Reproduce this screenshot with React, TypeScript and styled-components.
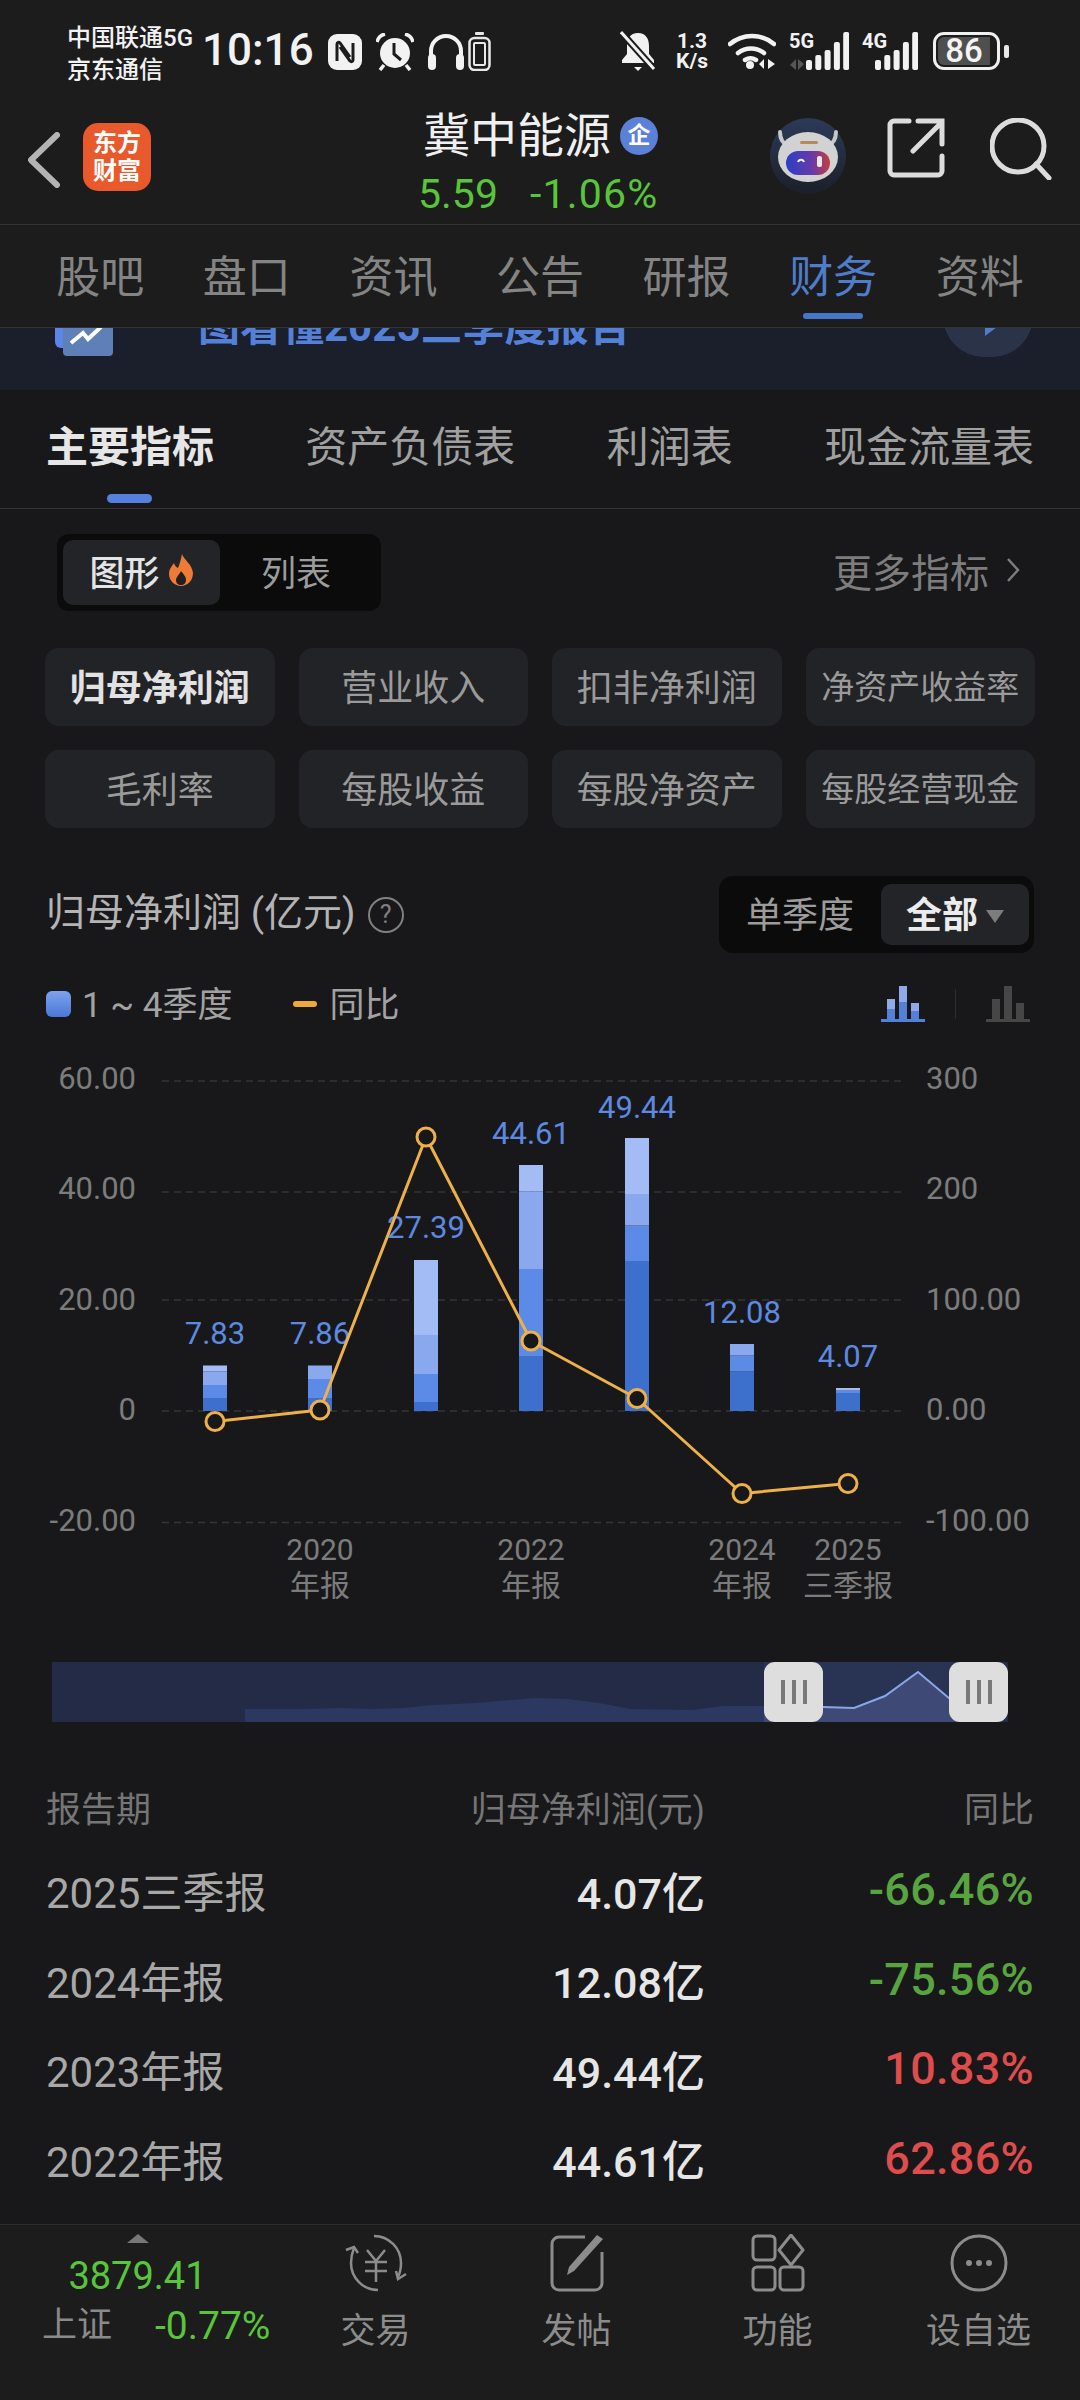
import React from 'react';
import styled, { createGlobalStyle } from 'styled-components';

const FONT = `Roboto, "Noto Sans CJK SC", sans-serif`;

const GlobalStyle = createGlobalStyle`
  html, body { margin: 0; padding: 0; background: #18181b; }
  * { box-sizing: border-box; }
`;

const Page = styled.div`
  width: 1080px;
  height: 2400px;
  overflow: hidden;
  display: flex;
  flex-direction: column;
  background: #18181b;
  font-family: ${FONT};
`;

// top bars
const TopArea = styled.div`
  height: 225px;
  background: #1c1c1c;
  border-bottom: 1px solid #343434;
`;

const StatusBar = styled.div`
  height: 104px;
  padding: 0 0 0 67px;
  display: flex;
  align-items: flex-start;
  color: #f2f2f2;
`;

const Carrier = styled.div`
  width: 135px;
  padding-top: 22px;
  font-size: 24px;
  font-weight: 500;
  line-height: 32px;
  white-space: nowrap;
`;

const Clock = styled.div`
  width: 126px;
  padding-top: 20px;
  font-size: 44px;
  line-height: 60px;
  font-weight: 500;
`;

const StatusIcons = styled.div`
  display: flex;
  gap: 14px;
  padding-top: 32px;
  align-items: center;
`;

const StatusRight = styled.div`
  margin-left: auto;
  padding: 30px 71px 0 0;
  display: flex;
  align-items: center;
  gap: 13px;
`;

const Speed = styled.div`
  width: 46px;
  text-align: center;
  font-size: 21px;
  font-weight: 700;
  line-height: 20px;
`;

const SignalBlock = styled.div<{ $w: number }>`
  position: relative;
  width: ${(p) => p.$w}px;
  height: 40px;
`;

const SignalLabel = styled.span`
  position: absolute;
  left: 0;
  top: -1px;
  font-size: 20px;
  font-weight: 700;
  line-height: 22px;
`;

const Battery = styled.div`
  display: flex;
  align-items: center;
  gap: 4px;
  margin-left: 2px;
`;

const BatteryShell = styled.div`
  width: 67px;
  height: 38px;
  border: 3px solid #f0f0f0;
  border-radius: 11px;
  padding: 2px;
`;

const BatteryFill = styled.div`
  height: 100%;
  width: 52px;
  background: #4f4f4f;
  border-radius: 6px 0 0 6px;
  color: #f4f4f4;
  font-size: 33px;
  font-weight: 500;
  line-height: 28px;
  text-align: center;
  white-space: nowrap;
`;

const BatteryNub = styled.div`
  width: 5px;
  height: 13px;
  background: #e8e8e8;
  border-radius: 2px;
`;

const Header = styled.div`
  height: 120px;
  padding: 0 28px 0 28px;
  display: flex;
  align-items: flex-start;
  position: relative;
`;

const BackIcon = styled.svg`
  width: 32px;
  height: 56px;
  margin-top: 28px;
`;

const Logo = styled.div`
  width: 68px;
  height: 68px;
  margin: 19px 0 0 23px;
  border-radius: 15px;
  background: #e85a2b;
  color: #fff;
  font-size: 24px;
  font-weight: 700;
  line-height: 28px;
  text-align: center;
  padding-top: 6px;
`;

const Quote = styled.div`
  position: absolute;
  left: 423px;
  top: 2px;
  width: 260px;
`;

const Name = styled.div`
  display: flex;
  align-items: center;
  gap: 9px;
  color: #f0f0f0;
  font-size: 47px;
  line-height: 60px;
`;

const Badge = styled.span`
  width: 38px;
  height: 38px;
  border-radius: 50%;
  background: #5b80d8;
  color: #fff;
  font-size: 23px;
  font-weight: 700;
  line-height: 38px;
  text-align: center;
`;

const Price = styled.div`
  display: flex;
  gap: 32px;
  color: #58c53a;
  font-size: 41px;
  line-height: 50px;
  margin: 3px 0 0 -5px;

  span + span {
    letter-spacing: 1.2px;
  }
`;

const HeaderTools = styled.div`
  margin-left: auto;
  display: flex;
  align-items: flex-start;
  gap: 41px;
  padding-top: 14px;
`;

const Tabs = styled.div`
  height: 103px;
  padding: 0 27px;
  display: grid;
  grid-template-columns: repeat(7, 1fr);
  background: #1c1c1c;
  border-bottom: 1px solid #343434;
`;

const Tab = styled.div<{ $active?: boolean }>`
  position: relative;
  text-align: center;
  padding-top: 21px;
  font-size: 44px;
  line-height: 64px;
  color: ${(p) => (p.$active ? '#4f7ccb' : '#848484')};

  &::after {
    content: '';
    display: ${(p) => (p.$active ? 'block' : 'none')};
    position: absolute;
    left: 50%;
    bottom: 8px;
    width: 60px;
    height: 6px;
    margin-left: -30px;
    border-radius: 3px;
    background: #4577c9;
  }
`;

// banner scrolled half way under the tabs
const Banner = styled.div`
  height: 62px;
  background: #1b1e2b;
  overflow: hidden;
  display: flex;
  padding-left: 55px;
`;

const BannerIcon = styled.svg`
  width: 58px;
  height: 28px;
  flex: none;
`;

const BannerText = styled.div`
  margin: -30px 0 0 85px;
  color: #5580d8;
  font-size: 42px;
  font-weight: 700;
  line-height: 58px;
  white-space: nowrap;
`;

const BannerArrow = styled.div`
  position: relative;
  margin: -53px 47px 0 auto;
  width: 90px;
  height: 82px;
  flex: none;
  border-radius: 41px;
  background: #2a3348;

  &::after {
    content: '';
    position: absolute;
    left: 42px;
    top: 43px;
    border-left: 12px solid #4f7ccb;
    border-top: 9px solid transparent;
    border-bottom: 9px solid transparent;
  }
`;

const SubTabs = styled.div`
  height: 119px;
  padding: 0 46px;
  display: flex;
  justify-content: space-between;
  border-bottom: 1px solid #323336;
`;

const SubTab = styled.div<{ $active?: boolean }>`
  position: relative;
  padding-top: 27px;
  font-size: 42px;
  line-height: 62px;
  font-weight: ${(p) => (p.$active ? 700 : 400)};
  color: ${(p) => (p.$active ? '#e6e6e6' : '#a0a0a0')};

  &::after {
    content: '';
    display: ${(p) => (p.$active ? 'block' : 'none')};
    position: absolute;
    left: 61px;
    bottom: 5px;
    width: 45px;
    height: 9px;
    border-radius: 5px;
    background: #5580dc;
  }
`;

const ViewRow = styled.div`
  margin-top: 25px;
  height: 77px;
  padding: 0 46px 0 57px;
  display: flex;
  justify-content: space-between;
  align-items: center;
`;

const Switcher = styled.div`
  width: 324px;
  height: 77px;
  padding: 6px;
  border-radius: 12px;
  background: #0b0b0c;
  display: flex;
  font-size: 35px;
`;

const SwitchItem = styled.div<{ $active?: boolean }>`
  width: ${(p) => (p.$active ? 157 : 152)}px;
  padding-bottom: 5px;
  border-radius: 10px;
  display: flex;
  align-items: center;
  justify-content: center;
  gap: 8px;
  background: ${(p) => (p.$active ? '#232427' : 'transparent')};
  color: ${(p) => (p.$active ? '#e4e4e4' : '#9c9c9c')};
  font-weight: ${(p) => (p.$active ? 500 : 400)};
`;

const MoreLink = styled.div`
  display: flex;
  align-items: center;
  gap: 17px;
  color: #7d7d7d;
  font-size: 39px;
  padding: 0 14px 5px 0;
`;

const ChipGrid = styled.div`
  margin-top: 37px;
  padding: 0 45px;
  display: grid;
  grid-template-columns: repeat(4, 1fr);
  grid-auto-rows: 78px;
  column-gap: 24px;
  row-gap: 24px;
`;

const Chip = styled.div<{ $active?: boolean; $small?: boolean }>`
  border-radius: 14px;
  background: #222326;
  padding-bottom: 5px;
  display: flex;
  align-items: center;
  justify-content: center;
  white-space: nowrap;
  font-size: ${(p) => (p.$small ? 33 : 36)}px;
  font-weight: ${(p) => (p.$active ? 700 : 400)};
  color: ${(p) => (p.$active ? '#e2e2e2' : '#9a9a9a')};
`;

const TitleRow = styled.div`
  margin-top: 48px;
  height: 77px;
  padding: 0 46px;
  display: flex;
  justify-content: space-between;
  align-items: center;
`;

const ChartTitle = styled.div`
  display: flex;
  align-items: center;
  gap: 12px;
  color: #b4b4b4;
  font-size: 39px;
  line-height: 60px;
  padding-bottom: 4px;
`;

const Help = styled.span`
  width: 36px;
  height: 36px;
  margin-top: 5px;
  border: 2px solid #808080;
  border-radius: 50%;
  color: #808080;
  font-size: 25px;
  line-height: 32px;
  text-align: center;
`;

const Period = styled.div`
  width: 315px;
  height: 77px;
  padding: 8px 5px 8px 0;
  border-radius: 14px;
  background: #0b0b0c;
  display: flex;
  font-size: 36px;
`;

const PeriodItem = styled.div<{ $active?: boolean }>`
  flex: ${(p) => (p.$active ? '0 0 148px' : '1')};
  padding-bottom: 5px;
  border-radius: 10px;
  display: flex;
  align-items: center;
  justify-content: center;
  gap: 8px;
  background: ${(p) => (p.$active ? '#232427' : 'transparent')};
  color: ${(p) => (p.$active ? '#ececec' : '#9c9c9c')};
  font-weight: ${(p) => (p.$active ? 700 : 400)};
`;

const Caret = styled.span`
  border-top: 13px solid #7c7c7c;
  border-left: 9px solid transparent;
  border-right: 9px solid transparent;
  margin-top: 8px;
`;

const LegendRow = styled.div`
  height: 60px;
  margin-top: 21px;
  padding: 0 46px;
  display: flex;
  align-items: center;
  color: #a2a2a2;
  font-size: 35px;
`;

const LegendText = styled.span`
  margin-bottom: 6px;
`;

const LegendSwatch = styled.span`
  width: 25px;
  height: 26px;
  border-radius: 6px;
  background: linear-gradient(#7fa2ee, #4a78d6);
  margin-right: 11px;
`;

const LegendDash = styled.span`
  width: 24px;
  height: 6px;
  border-radius: 3px;
  background: #eeaa3a;
  margin: 0 13px 0 60px;
`;

const LegendIcons = styled.div`
  margin-left: auto;
  display: flex;
  align-items: center;
  gap: 30px;
  padding-right: 4px;
`;

const LegendDivider = styled.span`
  width: 1px;
  height: 30px;
  background: #2c2c2e;
`;

const ChartSvg = styled.svg`
  display: block;
  width: 1080px;
  height: 592px;
  margin-top: 16px;
  flex: none;
  font-family: ${FONT};
`;

const Slider = styled.div`
  position: relative;
  width: 956px;
  height: 60px;
  flex: none;
  margin: 20px 0 0 52px;
`;

const SliderSvg = styled.svg`
  display: block;
  width: 956px;
  height: 60px;
`;

const Handle = styled.div`
  position: absolute;
  top: 0;
  width: 59px;
  height: 60px;
  border-radius: 11px;
  background: #dedede;
  display: flex;
  align-items: center;
  justify-content: center;
  gap: 7px;

  span {
    width: 4px;
    height: 24px;
    background: #797979;
  }
`;

const DataTable = styled.div`
  margin-top: 59px;
  padding: 0 46px;
  flex: 1;
`;

const TableRow = styled.div<{ $head?: boolean; $first?: boolean }>`
  height: ${(p) => (p.$head ? 48 : 89.5)}px;
  margin-top: ${(p) => (p.$first ? 16 : 0)}px;
  display: grid;
  grid-template-columns: 1fr auto 329px;
  align-items: center;
  font-size: ${(p) => (p.$head ? 35 : 42)}px;
  color: ${(p) => (p.$head ? '#767676' : '#a8a8a8')};
`;

const RightCell = styled.div`
  text-align: right;
`;

const ValueCell = styled(RightCell)`
  color: #e6e6e6;
  font-weight: 500;
  font-size: 43px;
`;

const ChangeCell = styled(RightCell)<{ $up: boolean }>`
  color: ${(p) => (p.$up ? '#de4c4c' : '#58a43e')};
  font-weight: 500;
  font-size: 45px;
  letter-spacing: 0.3px;
`;

const BottomNav = styled.div`
  height: 176px;
  flex: none;
  background: #1c1c1c;
  border-top: 1px solid #2c2c2c;
  display: grid;
  grid-template-columns: 275px repeat(4, 201px);
`;

const IndexCell = styled.div`
  display: flex;
  flex-direction: column;
  align-items: center;
  padding: 9px 0 0 0;
`;

const UpTriangle = styled.span`
  border-bottom: 9px solid #777;
  border-left: 11px solid transparent;
  border-right: 11px solid transparent;
`;

const IndexValue = styled.div`
  color: #58c53a;
  font-size: 38px;
  line-height: 52px;
  margin-top: 7px;
`;

const IndexFoot = styled.div`
  width: 100%;
  padding: 0 0 0 42px;
  display: flex;
  gap: 43px;
  align-items: center;
  line-height: 48px;
  color: #8a8a8a;
  font-size: 35px;

  b {
    font-weight: 400;
    font-size: 39px;
    color: #58c53a;
  }
`;

const NavItem = styled.div`
  display: flex;
  flex-direction: column;
  align-items: center;
  padding-top: 9px;
  color: #8c8c8c;
  font-size: 35px;
  line-height: 50px;

  svg {
    margin-bottom: 15px;
  }
`;

const BAR_X = [215, 320, 426, 531, 637, 742, 848];
const ZERO = 1411;
const SHADES = ['#3d6fcc', '#5b8be6', '#8aa8ee', '#a3bcf5'];

// segment tops in page y, bottom-up, one list per bar
const BARS: { tops: number[]; shades: number[]; label: string; labelY: number }[] = [
  { tops: [1398, 1385, 1371.5, 1365.5], shades: [0, 1, 2, 3], label: '7.83', labelY: 1333 },
  { tops: [1398, 1379, 1365.5], shades: [0, 1, 2], label: '7.86', labelY: 1333 },
  { tops: [1402, 1374, 1335, 1260], shades: [0, 1, 2, 3], label: '27.39', labelY: 1227 },
  { tops: [1356, 1269, 1191.5, 1165], shades: [0, 1, 2, 3], label: '44.61', labelY: 1133 },
  { tops: [1261, 1225.5, 1194, 1138], shades: [0, 1, 2, 3], label: '49.44', labelY: 1107 },
  { tops: [1371.5, 1355.5, 1344], shades: [0, 1, 2], label: '12.08', labelY: 1312 },
  { tops: [1393, 1390.5, 1388], shades: [0, 1, 3], label: '4.07', labelY: 1356 },
];

const LINE_Y = [1421.5, 1410, 1137, 1341, 1398.5, 1493.5, 1483.5];

const GRID = [
  { y: 1081, left: '60.00', right: '300', ly: 1078 },
  { y: 1192, left: '40.00', right: '200', ly: 1188 },
  { y: 1300, left: '20.00', right: '100.00', ly: 1299 },
  { y: 1411, left: '0', right: '0.00', ly: 1409 },
  { y: 1522.5, left: '-20.00', right: '-100.00', ly: 1520 },
];

const X_LABELS = [
  { x: 320, year: '2020', kind: '年报' },
  { x: 531, year: '2022', kind: '年报' },
  { x: 742, year: '2024', kind: '年报' },
  { x: 848, year: '2025', kind: '三季报' },
];

const ROWS = [
  { period: '2025三季报', value: '4.07亿', change: '-66.46%', up: false },
  { period: '2024年报', value: '12.08亿', change: '-75.56%', up: false },
  { period: '2023年报', value: '49.44亿', change: '10.83%', up: true },
  { period: '2022年报', value: '44.61亿', change: '62.86%', up: true },
];

function Signal({ label, width, arrows }: { label: string; width: number; arrows?: boolean }) {
  const start = width - 43;
  const heights = [10, 15, 20, 28, 38];
  return (
    <SignalBlock $w={width}>
      <SignalLabel>{label}</SignalLabel>
      <svg width={width} height={40} style={{ display: 'block' }}>
        {arrows && <path d="M7 28v11l-6-5zM9 28l6 5-6 6z" fill="#565656" />}
        {heights.map((h, i) => (
          <rect key={i} x={start + i * 9.3} y={39 - h} width={6} height={h} rx={2} fill="#f2f2f2" />
        ))}
      </svg>
    </SignalBlock>
  );
}

function TrendChart() {
  const linePoints = BAR_X.map((x, i) => `${x},${LINE_Y[i]}`).join(' ');
  return (
    <ChartSvg viewBox="0 1050 1080 592">
      {GRID.map((g) => (
        <g key={g.y}>
          <line x1={162} x2={901} y1={g.y} y2={g.y} stroke="#333436" strokeWidth={1.5} strokeDasharray="7 5" />
          <text x={136} y={g.ly} textAnchor="end" dominantBaseline="central" fontSize={31} fill="#7c7c7c">{g.left}</text>
          <text x={926} y={g.ly} dominantBaseline="central" fontSize={31} fill="#7c7c7c">{g.right}</text>
        </g>
      ))}
      {BARS.map((bar, i) => {
        const x = BAR_X[i] - 12;
        return (
          <g key={bar.label}>
            {bar.tops.map((top, j) => (
              <rect
                key={j}
                x={x}
                y={top}
                width={24}
                height={(j === 0 ? ZERO : bar.tops[j - 1]) - top}
                fill={SHADES[bar.shades[j]]}
              />
            ))}
            <text x={BAR_X[i]} y={bar.labelY} textAnchor="middle" dominantBaseline="central" fontSize={31} fill="#5d8ae0">
              {bar.label}
            </text>
          </g>
        );
      })}
      <polyline points={linePoints} fill="none" stroke="#eeb048" strokeWidth={3} strokeLinejoin="round" />
      {BAR_X.map((x, i) => (
        <circle key={x} cx={x} cy={LINE_Y[i]} r={9} fill="#17181a" stroke="#eeb048" strokeWidth={3} />
      ))}
      {X_LABELS.map((l) => (
        <g key={l.year} textAnchor="middle" fill="#7c7c7c">
          <text x={l.x} y={1549} dominantBaseline="central" fontSize={30}>{l.year}</text>
          <text x={l.x} y={1585} dominantBaseline="central" fontSize={30}>{l.kind}</text>
        </g>
      ))}
    </ChartSvg>
  );
}

const AREA: [number, number][] = [
  [193, 47], [251, 47], [289, 46], [320, 47], [351, 46], [382, 43], [423, 41], [482, 36],
  [516, 37], [547, 41], [578, 47], [640, 48], [671, 44], [712, 44], [771, 45], [802, 46],
  [833, 34], [866, 10], [898, 37], [912, 47],
];

function MiniRange() {
  const top = AREA.map(([x, y]) => `${x},${y}`).join(' ');
  const body = `M193 60 L${top} L912 60 Z`;
  return (
    <Slider>
      <SliderSvg viewBox="0 0 956 60">
        <defs>
          <clipPath id="picked">
            <rect x={712} y={0} width={240} height={60} />
          </clipPath>
        </defs>
        <rect width={956} height={60} fill="#232b46" />
        <rect x={712} width={240} height={60} fill="#293354" />
        <path d={body} fill="#2c3860" />
        <g clipPath="url(#picked)">
          <path d={body} fill="#3e4a75" />
          <polyline points={top} fill="none" stroke="#8aa6e6" strokeWidth={2} />
        </g>
      </SliderSvg>
      <Handle style={{ left: 712 }}><span /><span /><span /></Handle>
      <Handle style={{ left: 897 }}><span /><span /><span /></Handle>
    </Slider>
  );
}

export default function App() {
  return (
    <Page>
      <GlobalStyle />
      <TopArea>
        <StatusBar>
          <Carrier>中国联通5G<br />京东通信</Carrier>
          <Clock>10:16</Clock>
          <StatusIcons>
            <svg width="34" height="36" viewBox="0 0 34 36">
              <rect width="34" height="36" rx="9" fill="#f2f2f2" />
              <path d="M9 27V10c0-2 2-2 3-1l10 14M25 9v17c0 2-2 2-3 1L12 13" fill="none" stroke="#1c1c1c" strokeWidth="3" />
            </svg>
            <svg width="38" height="38" viewBox="0 0 38 38">
              <circle cx="19" cy="20" r="15" fill="#f2f2f2" />
              <path d="M18 10v11l7 6" fill="none" stroke="#1c1c1c" strokeWidth="3" />
              <path d="M1 9c1-4 4-7 8-8M37 9c-1-4-4-7-8-8M8 32l-4 5M30 32l4 5" fill="none" stroke="#f2f2f2" strokeWidth="3.5" />
            </svg>
            <svg width="36" height="36" viewBox="0 0 36 36">
              <path d="M3 22v-5a15 15 0 0 1 30 0v5" fill="none" stroke="#f2f2f2" strokeWidth="4" />
              <rect x="0" y="20" width="8" height="16" rx="4" fill="#f2f2f2" />
              <rect x="28" y="20" width="8" height="16" rx="4" fill="#f2f2f2" />
            </svg>
            <svg width="23" height="39" viewBox="0 0 23 39" style={{ marginLeft: -10 }}>
              <rect x="7" y="0" width="9" height="3" rx="1" fill="#e8e8e8" />
              <rect x="1.5" y="6" width="20" height="32" rx="5" fill="none" stroke="#e8e8e8" strokeWidth="2.5" />
              <rect x="6" y="11" width="11" height="22" rx="1" fill="none" stroke="#e8e8e8" strokeWidth="2" />
            </svg>
          </StatusIcons>
          <StatusRight>
            <svg width="36" height="42" viewBox="0 0 36 42">
              <path d="M18 3c8 0 11 6 11 13v8l5 6v3H2v-3l5-6v-8C7 9 10 3 18 3z" fill="#f2f2f2" />
              <path d="M14 37h8l-4 4z" fill="#f2f2f2" />
              <path d="M1 2l33 37" stroke="#1c1c1c" strokeWidth="7" />
              <path d="M1 2l33 37" stroke="#f2f2f2" strokeWidth="3" />
            </svg>
            <Speed>1.3<br />K/s</Speed>
            <svg width="48" height="38" viewBox="0 0 48 38">
              <path d="M2 12a34 34 0 0 1 44 0M10 21a21 21 0 0 1 26 0M17 28a10 10 0 0 1 11 0" fill="none" stroke="#f2f2f2" strokeWidth="4.5" strokeLinecap="round" />
              <circle cx="22" cy="33" r="4" fill="#f2f2f2" />
              <path d="M36 27v10l-5-5zM40 27l7 5-7 5z" fill="#f2f2f2" />
            </svg>
            <Signal label="5G" width={60} arrows />
            <Signal label="4G" width={56} />
            <Battery>
              <BatteryShell>
                <BatteryFill>86</BatteryFill>
              </BatteryShell>
              <BatteryNub />
            </Battery>
          </StatusRight>
        </StatusBar>
        <Header>
          <BackIcon viewBox="0 0 32 56">
            <path d="M29 3L3 28l26 25" fill="none" stroke="#b4b4b4" strokeWidth="6" strokeLinecap="round" strokeLinejoin="round" />
          </BackIcon>
          <Logo>东方<br />财富</Logo>
          <Quote>
            <Name>冀中能源<Badge>企</Badge></Name>
            <Price><span>5.59</span><span>-1.06%</span></Price>
          </Quote>
          <HeaderTools>
            <svg width="76" height="76" viewBox="0 0 76 76">
              <defs>
                <linearGradient id="halo" x1="0" y1="0" x2="0" y2="1">
                  <stop offset="0" stopColor="#2c3a58" />
                  <stop offset="1" stopColor="#1c1f2a" />
                </linearGradient>
                <linearGradient id="visor" x1="0" y1="0" x2="1" y2="0">
                  <stop offset="0" stopColor="#2b3fc4" />
                  <stop offset="0.6" stopColor="#6a3aa8" />
                  <stop offset="1" stopColor="#c2403c" />
                </linearGradient>
              </defs>
              <circle cx="38" cy="38" r="38" fill="url(#halo)" />
              <path d="M10 14c0 8 3 12 9 14M66 14c0 8-3 12-9 14" fill="none" stroke="#c8c8c8" strokeWidth="4" strokeLinecap="round" />
              <ellipse cx="38" cy="39" rx="30" ry="25" fill="#d2d2d2" />
              <rect x="30" y="23" width="18" height="3" rx="1.5" fill="#b58a5c" />
              <rect x="16" y="33" width="44" height="24" rx="12" fill="url(#visor)" />
              <path d="M28 44c1-3 5-3 6 0" fill="none" stroke="#f0f0f0" strokeWidth="2" />
              <rect x="47" y="38" width="5" height="11" rx="2" fill="#f0e6e6" />
            </svg>
            <svg width="58" height="60" viewBox="0 0 58 60">
              <path d="M22 3H7a4 4 0 0 0-4 4v46a4 4 0 0 0 4 4h44a4 4 0 0 0 4-4V38" fill="none" stroke="#dcdcdc" strokeWidth="5" strokeLinecap="round" />
              <path d="M26 33L55 4M31 3h24v23" fill="none" stroke="#dcdcdc" strokeWidth="5" strokeLinecap="round" />
            </svg>
            <svg width="62" height="62" viewBox="0 0 62 62" style={{ marginLeft: 4 }}>
              <circle cx="28" cy="28" r="26" fill="none" stroke="#dcdcdc" strokeWidth="5" />
              <path d="M46 46l13 14" stroke="#dcdcdc" strokeWidth="5" strokeLinecap="round" />
            </svg>
          </HeaderTools>
        </Header>
      </TopArea>

      <Tabs>
        <Tab>股吧</Tab>
        <Tab>盘口</Tab>
        <Tab>资讯</Tab>
        <Tab>公告</Tab>
        <Tab>研报</Tab>
        <Tab $active>财务</Tab>
        <Tab>资料</Tab>
      </Tabs>

      <Banner>
        <BannerIcon viewBox="0 0 58 28">
          <rect x="0" y="-20" width="42" height="40" rx="6" fill="#5b86e8" />
          <rect x="8" y="-20" width="50" height="48" rx="4" fill="#5e7fb8" />
          <path d="M16 15l12-10 5 6 13-12" fill="none" stroke="#fff" strokeWidth="4" />
        </BannerIcon>
        <BannerText>图看懂2025三季度报告</BannerText>
        <BannerArrow />
      </Banner>

      <SubTabs>
        <SubTab $active>主要指标</SubTab>
        <SubTab>资产负债表</SubTab>
        <SubTab>利润表</SubTab>
        <SubTab>现金流量表</SubTab>
      </SubTabs>

      <ViewRow>
        <Switcher>
          <SwitchItem $active>
            图形
            <svg width="26" height="32" viewBox="0 0 26 32">
              <path d="M14 0c2 6 10 10 11 19 0 8-6 13-12 13S1 27 1 20c0-5 3-8 5-11 1 3 2 4 4 5 2-5 3-9 4-14z" fill="#ee7a35" />
              <path d="M13 17c2 3 5 5 5 9 0 3-2 5-5 5s-5-2-5-5c0-3 3-5 5-9z" fill="#1f1f22" />
            </svg>
          </SwitchItem>
          <SwitchItem>列表</SwitchItem>
        </Switcher>
        <MoreLink>
          更多指标
          <svg width="14" height="26" viewBox="0 0 14 26">
            <path d="M2 2l10 11L2 24" fill="none" stroke="#7d7d7d" strokeWidth="2.5" />
          </svg>
        </MoreLink>
      </ViewRow>

      <ChipGrid>
        <Chip $active>归母净利润</Chip>
        <Chip>营业收入</Chip>
        <Chip>扣非净利润</Chip>
        <Chip $small>净资产收益率</Chip>
        <Chip>毛利率</Chip>
        <Chip>每股收益</Chip>
        <Chip>每股净资产</Chip>
        <Chip $small>每股经营现金</Chip>
      </ChipGrid>

      <TitleRow>
        <ChartTitle>归母净利润 (亿元)<Help>?</Help></ChartTitle>
        <Period>
          <PeriodItem>单季度</PeriodItem>
          <PeriodItem $active>全部<Caret /></PeriodItem>
        </Period>
      </TitleRow>

      <LegendRow>
        <LegendSwatch />
        <LegendText>1 ~ 4季度</LegendText>
        <LegendDash />
        <LegendText>同比</LegendText>
        <LegendIcons>
          <svg width="44" height="36" viewBox="0 0 44 36">
            <rect x="6" y="13" width="8" height="21" fill="#5580d8" />
            <rect x="18" y="0" width="8" height="34" fill="#5580d8" />
            <rect x="30" y="17" width="8" height="17" fill="#5580d8" />
            <rect x="6" y="13" width="8" height="10" fill="#8fa9ea" />
            <rect x="18" y="0" width="8" height="16" fill="#8fa9ea" />
            <rect x="30" y="17" width="8" height="8" fill="#8fa9ea" />
            <rect x="0" y="33" width="44" height="3" fill="#5580d8" />
          </svg>
          <LegendDivider />
          <svg width="44" height="36" viewBox="0 0 44 36">
            <rect x="6" y="13" width="8" height="21" fill="#464646" />
            <rect x="18" y="0" width="8" height="34" fill="#464646" />
            <rect x="30" y="17" width="8" height="17" fill="#464646" />
            <rect x="0" y="33" width="44" height="3" fill="#464646" />
          </svg>
        </LegendIcons>
      </LegendRow>

      <TrendChart />
      <MiniRange />

      <DataTable>
        <TableRow $head>
          <div>报告期</div>
          <RightCell>归母净利润(元)</RightCell>
          <RightCell>同比</RightCell>
        </TableRow>
        {ROWS.map((row, i) => (
          <TableRow key={row.period} $first={i === 0}>
            <div>{row.period}</div>
            <ValueCell>{row.value}</ValueCell>
            <ChangeCell $up={row.up}>{row.change}</ChangeCell>
          </TableRow>
        ))}
      </DataTable>

      <BottomNav>
        <IndexCell>
          <UpTriangle />
          <IndexValue>3879.41</IndexValue>
          <IndexFoot>上证<b>-0.77%</b></IndexFoot>
        </IndexCell>
        <NavItem>
          <svg width="64" height="58" viewBox="0 0 64 58">
            <path d="M30 2a27 27 0 0 1 27 27c0 6-1 10-3 14M34 56A27 27 0 0 1 7 29c0-6 1-10 3-15" fill="none" stroke="#8c8c8c" strokeWidth="2.5" />
            <path d="M2 16l8-3 4 6M62 40l-8 5-2-8" fill="none" stroke="#8c8c8c" strokeWidth="2.5" />
            <path d="M23 16l9 11 9-11M21 28h22M21 37h22M32 27v21" fill="none" stroke="#8c8c8c" strokeWidth="2.5" />
          </svg>
          交易
        </NavItem>
        <NavItem>
          <svg width="56" height="58" viewBox="0 0 56 58">
            <path d="M36 3H10a7 7 0 0 0-7 7v39a7 7 0 0 0 7 7h36a7 7 0 0 0 7-7V18" fill="none" stroke="#8c8c8c" strokeWidth="3" />
            <path d="M48 1l6 4-29 32-7 4 2-8z" fill="#8c8c8c" />
          </svg>
          发帖
        </NavItem>
        <NavItem>
          <svg width="54" height="58" viewBox="0 0 54 58">
            <rect x="2" y="2" width="22" height="24" rx="4" fill="none" stroke="#8c8c8c" strokeWidth="3" />
            <path d="M40 1l12 15-12 15-12-15z" fill="none" stroke="#8c8c8c" strokeWidth="3" strokeLinejoin="round" />
            <rect x="2" y="33" width="22" height="23" rx="4" fill="none" stroke="#8c8c8c" strokeWidth="3" />
            <rect x="29" y="33" width="23" height="23" rx="4" fill="none" stroke="#8c8c8c" strokeWidth="3" />
          </svg>
          功能
        </NavItem>
        <NavItem>
          <svg width="58" height="58" viewBox="0 0 58 58">
            <circle cx="29" cy="29" r="27" fill="none" stroke="#8c8c8c" strokeWidth="3" />
            <circle cx="19" cy="29" r="3" fill="#8c8c8c" />
            <circle cx="29" cy="29" r="3" fill="#8c8c8c" />
            <circle cx="39" cy="29" r="3" fill="#8c8c8c" />
          </svg>
          设自选
        </NavItem>
      </BottomNav>
    </Page>
  );
}
